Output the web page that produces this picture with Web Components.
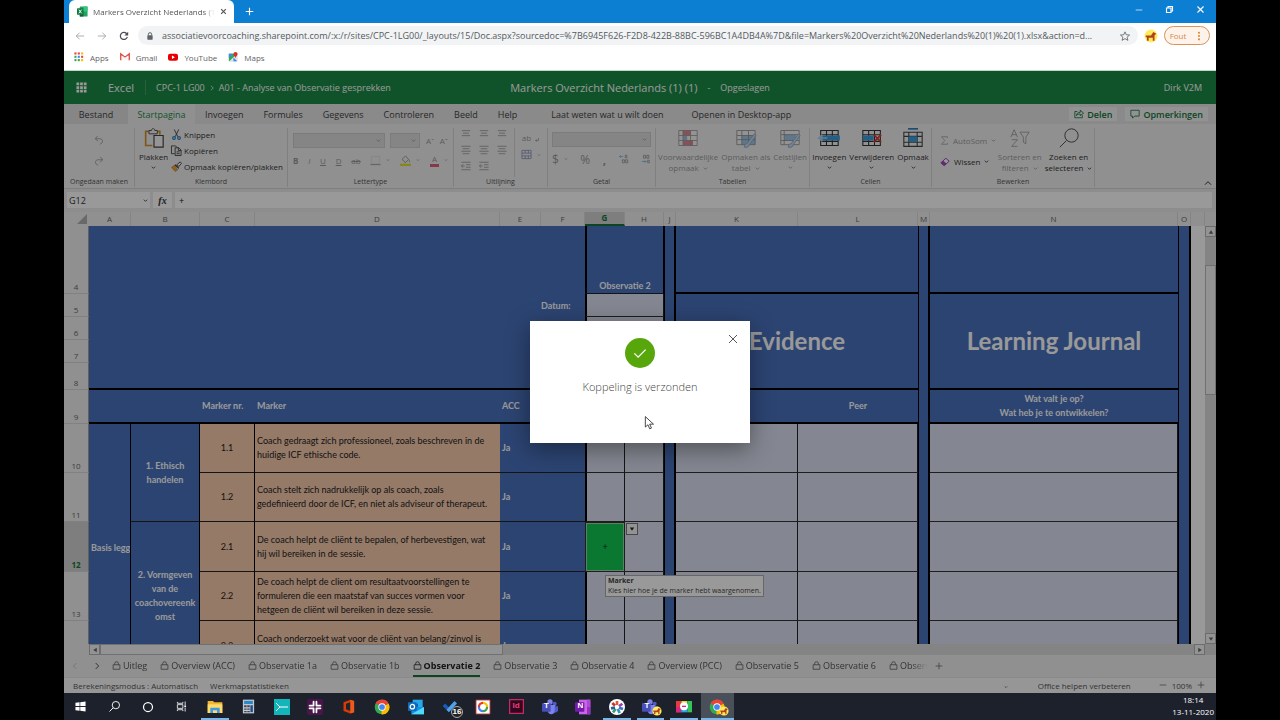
<!DOCTYPE html>
<html lang="nl">
<head>
<meta charset="utf-8">
<title>Markers Overzicht Nederlands (1) (1)</title>
<style>
    html, body { height: 100%; }
    body {
        margin: 0;
        background: #000;
        font-family: "Open Sans", "Noto Sans", sans-serif;
        font-size: 9px;
    }
    desktop-screen { margin: 0 5%; }
</style>
</head>
<body>
<desktop-screen>
    <browser-bar></browser-bar>
    <excel-app></excel-app>
    <task-bar></task-bar>
</desktop-screen>

<script>
// Icons, all on a 24x24 box
const ICONS = {
    excel: `<rect x="6" y="1" width="17" height="22" rx="1" fill="#21a366"/><path d="M14 1h9v11h-9z" fill="#33c481"/><path d="M6 12h8v11H6z" fill="#185c37"/><rect x="0" y="5" width="14" height="14" rx="1" fill="#107c41"/><path d="M4 8l6 8M10 8l-6 8" stroke="#fff" stroke-width="2"/>`,
    close: `<path d="M4 4l16 16M20 4L4 20" class="s"/>`,
    plus: `<path d="M12 2v20M2 12h20" class="s"/>`,
    minus: `<path d="M2 12h20" class="s"/>`,
    restore: `<path d="M4 8h12v12H4zM8 8V4h12v12h-4" class="s"/>`,
    back: `<path d="M22 12H3M11 4l-8 8 8 8" class="s"/>`,
    forward: `<path d="M2 12h19M13 4l8 8-8 8" class="s"/>`,
    reload: `<path d="M20 14a8.500 8.500 0 1 1-2-8l2 2" class="s"/><path d="M22 2v9h-9z" fill="currentColor"/>`,
    padlock: `<path d="M7 11V7a5 5 0 0 1 10 0v4" class="s"/><rect x="4" y="10" width="16" height="13" rx="2" fill="currentColor"/>`,
    lock: `<path d="M7 10V7a5 5 0 0 1 10 0v3M3 10h18v12H3z" class="s"/>`,
    star: `<path d="M12 2l3 7 8 .7-6 5.200 2 7.600-7-4.200-7 4.200 2-7.600L1 9.700 9 9z" class="s"/>`,
    horse: `<circle cx="12" cy="12" r="11" fill="#ffec5c"/><path d="M3 11h9l4-6 5 3-3 3v9h-3v-5H8v5H5v-6H3z" fill="#b4411e"/>`,
    dots: `<g fill="#e8822a"><circle cx="12" cy="4" r="2.500"/><circle cx="12" cy="12" r="2.500"/><circle cx="12" cy="20" r="2.500"/></g>`,
    apps: `<path d="M1 1h5v5H1z" fill="#ea4335"/><path d="M9 1h5v5H9z" fill="#ea4335"/><path d="M17 1h5v5h-5z" fill="#fbbc04"/><path d="M1 9h5v5H1z" fill="#34a853"/><path d="M9 9h5v5H9z" fill="#4285f4"/><path d="M17 9h5v5h-5z" fill="#ea4335"/><path d="M1 17h5v5H1z" fill="#34a853"/><path d="M9 17h5v5H9z" fill="#34a853"/><path d="M17 17h5v5h-5z" fill="#fbbc04"/>`,
    gmail: `<path d="M2 20V5l10 8 10-8v15" fill="none" stroke="#e0443a" stroke-width="3.500"/><path d="M4 19V8l8 6 8-6v11z" fill="#f5f5f5"/>`,
    youtube: `<rect x="0" y="4" width="24" height="17" rx="5" fill="#e80000"/><path d="M9.500 8.500l7 4-7 4z" fill="#fff"/>`,
    maps: `<path d="M2 4h20v18H2z" fill="#34a853"/><path d="M2 4h10L2 15z" fill="#4285f4"/><path d="M3 22L22 4v18z" fill="#dfe3e8"/><path d="M13 13l9 9h-9z" fill="#4285f4"/><path d="M18 0a5 5 0 0 1 5 5c0 4-4 5-5 10-1-5-5-6-5-10a5 5 0 0 1 5-5z" fill="#d93025"/>`,
    waffle: `<g fill="currentColor"><path d="M1 1h6v6H1zM9 1h6v6H9zM17 1h6v6h-6zM1 9h6v6H1zM9 9h6v6H9zM17 9h6v6h-6zM1 17h6v6H1zM9 17h6v6H9zM17 17h6v6h-6z"/></g>`,
    down: `<path d="M4 8l8 8 8-8" class="s"/>`,
    up: `<path d="M3 17l9-9 9 9" class="s"/>`,
    left: `<path d="M16 3l-9 9 9 9" class="s"/>`,
    right: `<path d="M8 3l9 9-9 9" class="s"/>`,
    triDown: `<path d="M3 6h18l-9 13z" fill="currentColor"/>`,
    triUp: `<path d="M3 19h18L12 5z" fill="currentColor"/>`,
    triLeft: `<path d="M19 3v18L5 12z" fill="currentColor"/>`,
    triRight: `<path d="M5 3v18l14-9z" fill="currentColor"/>`,
    undo: `<path d="M9 2L3 9l7 6M3 9h11c8 0 9 11 0 13" class="s"/>`,
    redo: `<path d="M15 2l6 7-7 6M21 9H10c-8 0-9 11 0 13" class="s"/>`,
    paste: `<path d="M10 21H2V4h17v4" fill="none" stroke="#d0922a" stroke-width="2"/><path d="M6 7V3h3c0-3 4-3 4 0h3v4z" fill="#f1f1f1" stroke="#555" stroke-width="1.200"/><path d="M12 9h11v14H12z" fill="#f8f8f8" stroke="#444" stroke-width="1.400"/>`,
    cut: `<path d="M7 1l8 16M17 1L9 17" stroke="#444" stroke-width="2" fill="none"/><g fill="none" stroke="#2b7fc0" stroke-width="2.500"><circle cx="6.500" cy="19.500" r="3"/><circle cx="17.500" cy="19.500" r="3"/></g>`,
    copy: `<path d="M8 19H1V2h9l3 3M9 6h8l5 5v12H9zM16 6v6h6M12 15h7M12 19h7" stroke="#333" stroke-width="1.800" fill="none"/>`,
    brush: `<path d="M13 8l7-6 3 3-6 7z" fill="#fff" stroke="#444" stroke-width="2"/><path d="M10 7l8 8-2 2-9-8z" fill="#444"/><path d="M6 10l9 9-6 4-8-9z" fill="#f0a030" stroke="#a86b1d"/>`,
    border: `<path d="M3 3h18v16H3z" fill="#eee" stroke="#ccc"/><path d="M1 21h22" class="s"/>`,
    fill: `<path d="M5 9l7-7 7 8-8 7zM19 10c3 3 2 5 2 6" class="s"/><path d="M0 19h24v5H0z" fill="#dfe22c"/>`,
    linesTop: `<path d="M2 4h20M5 10h14M2 16h20" class="s"/>`,
    lines: `<path d="M1 3h22M4 9h16M1 15h22M4 21h16" class="s"/>`,
    indent: `<path d="M1 3h22M12 9h11M12 15h11M1 21h22M1 12h8M5 8l-4 4 4 4" class="s"/>`,
    wrap: `<path d="M20 13v7h-8M15 17l-3 3 3 3" class="s"/>`,
    merge: `<path d="M2 3h20v18H2zM2 9h20M2 15h20M9 3v6M16 3v6M9 15v6M16 15v6" fill="none" stroke="#8b93b8" stroke-width="1.800"/>`,
    decUp: `<path d="M10 6H1l3-3M1 6l3 3" fill="none" stroke="#7db4d4" stroke-width="2"/><path d="M15 3h4v6h-4zM8 14h5v7H8zM16 14h5v7h-5z" class="s"/>`,
    decDown: `<path d="M2 18h10l-3-3M12 18l-3 3" fill="none" stroke="#7db4d4" stroke-width="2"/><path d="M6 3h5v7H6zM14 3h5v7h-5zM16 15h4v6h-4z" class="s"/>`,
    condFormat: `<path d="M1 3h22v18H1z" fill="#f6f6f6"/><path d="M6 3h9v6H6zM6 15h12v6H6z" fill="#e8868e"/><path d="M6 9h5v6H6z" fill="#9ec0e0"/><path d="M1 3h22v18H1zM1 9h22M1 15h22M6 3v18M15 3v18" fill="none" stroke="#989898"/>`,
    tableFormat: `<path d="M1 3h22v17H1z" fill="#f6f6f6"/><path d="M7 9h16v11H7z" fill="#9ec5e8"/><path d="M1 3h22v17H1zM1 9h22M1 14h22M7 3v17M15 3v17" fill="none" stroke="#909090"/><path d="M22 7L13 19c-2 0-3 1-3 4 4 1 6-1 6-3L24 9z" fill="#c3d9ee" stroke="#88a8c8"/>`,
    cellStyle: `<path d="M1 3h22v17H1z" fill="#f6f6f6"/><path d="M5 8h14v7H5z" fill="#9ec5e8"/><path d="M1 3h22v17H1zM1 8h22M1 15h22M5 3v17" fill="none" stroke="#909090"/><path d="M22 7L13 19c-2 0-3 1-3 4 4 1 6-1 6-3L24 9z" fill="#c3d9ee" stroke="#88a8c8"/>`,
    insert: `<path d="M2 3h21v18H2zM2 8h21M2 16h21M9 3v18M16 3v18" fill="#f4f4f4" stroke="#333" stroke-width="1.300"/><path d="M4 9h21v6H4z" fill="#3c9ddc"/><path d="M10 12H0l4-4M0 12l4 4" stroke="#a8d4f2" stroke-width="2" fill="none"/>`,
    remove: `<path d="M1 3h21v18H1zM1 8h21M1 16h21M8 3v18M15 3v18" fill="#f4f4f4" stroke="#333" stroke-width="1.300"/><path d="M1 9h13v6H1z" fill="#3c9ddc"/><path d="M14 8l9 9M23 8l-9 9" stroke="#e0392f" stroke-width="2"/>`,
    format: `<path d="M1 5h22v17H1zM1 10h22M1 17h22M7 5v17M17 5v17" fill="#f4f4f4" stroke="#444" stroke-width="1.300"/><path d="M7 10h10v7H7z" fill="#3c9ddc"/><path d="M6 1h12" stroke="#2b7fc0" stroke-width="2"/>`,
    sigma: `<path d="M20 5V2H4l9 10-9 10h16v-3" class="s"/>`,
    eraser: `<path d="M2 14L14 3l8 7L10 21z" fill="#fff" stroke="#7a3294" stroke-width="2"/><path d="M2 14l6-5 8 7-6 5z" fill="#a845c4"/>`,
    filter: `<path d="M12 5h11l-4 6v8l-3-2v-6z" class="s"/><path d="M1 11l4-9 4 9M2.500 8h5M2 14h7l-7 8h7" class="s"/>`,
    find: `<circle cx="15" cy="9" r="8" class="s"/><path d="M9 15l-8 8" class="s"/>`,
    share: `<path d="M8 6H2v15h18v-6M6 16c0-6 4-8 9-8V3l8 7-8 6v-4c-4 0-7 0-9 4z" class="s"/>`,
    comment: `<path d="M2 3h20v14H11l-5 5v-5H2z" class="s"/>`,
    check: `<circle cx="12" cy="12" r="12" fill="#57a70c"/><path d="M7.500 12.300l3 3 6-6" fill="none" stroke="#fff" stroke-width="1.100"/>`,
    pointer: `<path d="M4 1v18l4.500-4 3 7 3-1.300-3-6.700H18z" fill="#fff" stroke="#222" stroke-width="1.400"/>`,
    windows: `<path d="M1 4l9-1.300V11H1zM11.500 2.500L23 1v10H11.500zM1 13h9v8.300L1 20zM11.500 13H23v10l-11.500-1.500z" fill="#fff"/>`,
    cortana: `<circle cx="12" cy="12" r="9" fill="none" stroke="#fff" stroke-width="2.500"/>`,
    taskview: `<path d="M3 8h12v8H3zM3 2v3h12V2M3 22v-3h12v3M20 1v9M20 14v9" fill="none" stroke="#fff" stroke-width="1.800"/><path d="M18 10h4v3h-4z" fill="#fff"/>`,
    explorer: `<path d="M1 3h8l2 2h12v16H1z" fill="#f5b62e"/><path d="M1 8h22v13H1z" fill="#ffdb6c"/><path d="M5 21v-8h14v8h-4v-4H9v4z" fill="#3d9be0"/>`,
    calc: `<path d="M3 1h18v22H3z" fill="#bfc8d0"/><path d="M5 3h14v5H5z" fill="#2b88c8"/><path d="M5 10h4v3H5zM10 10h4v3h-4zM5 15h4v2H5zM10 15h4v2h-4zM5 19h4v2H5zM10 19h4v2h-4z" fill="#445"/><path d="M15 10h4v11h-4z" fill="#1f4f86"/>`,
    flow: `<path d="M0 0h24v24H0z" fill="#12b5ba"/><path d="M3 6l6 6-6 6M9 12h12" stroke="#fff" fill="none" stroke-width="1.500"/>`,
    slack: `<rect width="24" height="24" rx="3" fill="#4a154b"/><path d="M10 4v6M4 10h1M14 10h6M14 5v0M14 14v6M4 14h6M20 14h0M10 19v0M14 10V4M4 10h6M10 14v6M14 14h6" stroke="#fff" stroke-width="3" stroke-linecap="round"/><path d="M12 2v20M2 12h20" stroke="#4a154b" stroke-width="1"/>`,
    office: `<path d="M15 1L4 5v14l11 4 6-2V3z" fill="#d83b01"/><path d="M15 5l-7 2.500v9L15 19z" fill="#20242e"/><path d="M15 1l6 2v18l-6 2z" fill="#ea5b1e"/>`,
    chrome: `<circle cx="12" cy="12" r="11" fill="#34a853"/><path d="M12 12L2.500 6.500A11 11 0 0 1 22 7z" fill="#ea4335"/><path d="M12 12h0L22 7a11 11 0 0 1-11 16z" fill="#fbbc04"/><circle cx="12" cy="12" r="5.500" fill="#fff"/><circle cx="12" cy="12" r="4.300" fill="#4285f4"/>`,
    outlook: `<path d="M7 1h15v13H7z" fill="#28a8ea"/><path d="M7 7h8v7H7z" fill="#0364b8"/><path d="M5 12h19v11H5z" fill="#1490df"/><path d="M5 23l19-11v11z" fill="#50d9ff"/><rect y="5" width="13" height="13" rx="1" fill="#0f6cbd"/><circle cx="6.500" cy="11.500" r="3.300" fill="none" stroke="#fff" stroke-width="1.800"/>`,
    todo: `<path d="M1 11l4-4 6 6-4 4z" fill="#185abd"/><path d="M7 17l13-14 4 4-13 14z" fill="#4aa3f0"/>`,
    photos: `<path d="M0 0h24v24H0z" fill="#fff" stroke="#c33" stroke-width="1.500"/><path d="M5 12a7 7 0 0 1 7-7" class="c" stroke="#e03c31"/><path d="M12 5a7 7 0 0 1 7 7" class="c" stroke="#fbbc04"/><path d="M19 12a7 7 0 0 1-7 7" class="c" stroke="#34a853"/><path d="M12 19a7 7 0 0 1-7-7" class="c" stroke="#4285f4"/>`,
    indesign: `<path d="M1 1h22v22H1z" fill="#35071c" stroke="#c52a68" stroke-width="2"/>`,
    teams: `<circle cx="19" cy="7" r="3" fill="#5059c9"/><circle cx="12" cy="4.500" r="4" fill="#7b83eb"/><path d="M9 9h11v8a6 6 0 0 1-11 3z" fill="#7b83eb"/><path d="M19 11h5v6a4 4 0 0 1-5 3z" fill="#5059c9"/><rect y="6" width="13" height="13" rx="1" fill="#464eb8"/>`,
    onenote: `<path d="M6 1h17v22H6z" fill="#ca64ea"/><path d="M18 1h5v11h-5z" fill="#ae4bd5"/><path d="M18 12h5v11h-5z" fill="#9332bf"/><rect y="5" width="14" height="14" rx="1" fill="#7719aa"/>`,
    pinwheel: `<circle cx="12" cy="12" r="12" fill="#fff"/><g stroke-width="4"><path d="M12 9V3" stroke="#e4572e"/><path d="M15 11l5-4" stroke="#8e44ad"/><path d="M15 13l6 2" stroke="#3f6fc4"/><path d="M13 15l3 6" stroke="#2b94b8"/><path d="M10 15l-4 5" stroke="#2fa36b"/><path d="M9 13l-6 1" stroke="#2c5aa0"/><path d="M9 10L5 6" stroke="#c0392b"/></g>`,
    video: `<path d="M0 3h8v17H0z" fill="#e93b3b"/><path d="M8 3h9v9H8z" fill="#f3d02a"/><path d="M17 3h7v17h-7z" fill="#35c35a"/><path d="M0 12h8v8H0z" fill="#d6287c"/><path d="M8 12h9v8H8z" fill="#2da5e8"/><circle cx="12" cy="11" r="6" fill="#fff"/><path d="M9 11h6" stroke="#d6287c" stroke-width="2"/>`
};

class UiIcon extends HTMLElement {
    constructor() {
        super();
        this.attachShadow({ mode: "open" });
    }

    connectedCallback() {
        const size = this.getAttribute("size") || 10;
        const weight = this.getAttribute("weight") || 2;
        this.shadowRoot.innerHTML = `
        <style>
            :host { display: inline-flex; flex: none; }
            svg { display: block; overflow: visible; }
            .s { fill: none; stroke: currentColor; stroke-width: ${weight}; }
            .c { fill: none; stroke-width: 4; }
        </style>
        <svg width="${size}" height="${size}" viewBox="0 0 24 24" aria-hidden="true">${ICONS[this.getAttribute("name")]}</svg>`;
    }
}
customElements.define("ui-icon", UiIcon);

// Reset shared by the elements that hold controls
const CONTROLS = `
    * { box-sizing: border-box; }
    button, input, select {
        margin: 0;
        padding: 0;
        border: 0;
        background: none;
        color: inherit;
        font: inherit;
        appearance: none;
        border-radius: 0;
    }
    button { display: flex; align-items: center; justify-content: center; white-space: nowrap; }
    a { color: inherit; text-decoration: none; }
`;

class DesktopScreen extends HTMLElement {
    constructor() {
        super();
        this.attachShadow({ mode: "open" });
        this.shadowRoot.innerHTML = `
        <style>
            :host { display: flex; flex-direction: column; height: 100vh; overflow: hidden; background: #fff; }
        </style>
        <slot></slot>`;
    }
}
customElements.define("desktop-screen", DesktopScreen);

class BrowserBar extends HTMLElement {
    constructor() {
        super();
        this.attachShadow({ mode: "open" });
        this.shadowRoot.innerHTML = `
        <style>
            ${CONTROLS}
            :host { display: block; background: #fff; color: #5f6368; font-size: 8px; border-bottom: 1px solid #c4d6ca; }
            .titles { display: flex; height: 23px; background: #0c7fd3; padding-left: 5px; color: #fff; }
            .tab { display: flex; align-items: center; gap: 5px; width: 165px; padding: 0 7px 0 8px; background: #fff; color: #555; border-radius: 6px 6px 0 0; }
            .tab span { flex: 1; overflow: hidden; white-space: nowrap; -webkit-mask-image: linear-gradient(90deg, #000 90%, transparent); mask-image: linear-gradient(90deg, #000 90%, transparent); }
            .new { width: 30px; }
            .win { display: flex; margin-left: auto; padding-bottom: 4px; }
            .win button { width: 31px; }
            .tools { display: flex; align-items: center; height: 25px; padding: 0 6px 0 8px; gap: 6px; }
            .nav { width: 16px; height: 16px; color: #9aa0a6; }
            .nav.dark { color: #4a4d51; }
            .omni { display: flex; flex: 1; align-items: center; gap: 8px; height: 19px; padding: 0 8px; border-radius: 10px; background: #f1f3f4; }
            .omni input { flex: 1; min-width: 0; font-size: 9px; color: #55595e; text-overflow: ellipsis; }
            .error { gap: 8px; width: 46px; height: 19px; border: 1px solid #d99257; border-radius: 10px; background: #fdf3ea; color: #d98748; }
            .marks { display: flex; gap: 11px; height: 22px; padding: 0 10px 4px; align-items: center; }
            .marks a { display: flex; gap: 6px; align-items: center; }
        </style>
        <div class="titles">
            <div class="tab"><ui-icon name="excel" size="11"></ui-icon><span>Markers Overzicht Nederlands (1) (1)</span><button aria-label="Tabblad sluiten"><ui-icon name="close" size="7" weight="4"></ui-icon></button></div>
            <button class="new" aria-label="Nieuw tabblad"><ui-icon name="plus" size="9" weight="3"></ui-icon></button>
            <div class="win">
                <button aria-label="Minimaliseren"><ui-icon name="minus" size="8"></ui-icon></button>
                <button aria-label="Herstellen"><ui-icon name="restore" size="9" weight="3"></ui-icon></button>
                <button aria-label="Sluiten"><ui-icon name="close" size="9" weight="3"></ui-icon></button>
            </div>
        </div>
        <div class="tools">
            <button class="nav" aria-label="Terug"><ui-icon name="back"></ui-icon></button>
            <button class="nav" aria-label="Vooruit"><ui-icon name="forward"></ui-icon></button>
            <button class="nav dark" aria-label="Vernieuwen"><ui-icon name="reload" weight="3"></ui-icon></button>
            <div class="omni">
                <ui-icon name="padlock" size="8" weight="3"></ui-icon>
                <input aria-label="Adres" value="associatievoorcoaching.sharepoint.com/:x:/r/sites/CPC-1LG00/_layouts/15/Doc.aspx?sourcedoc=%7B6945F626-F2D8-422B-88BC-596BC1A4DB4A%7D&amp;file=Markers%20Overzicht%20Nederlands%20(1)%20(1).xlsx&amp;action=d...">
                <ui-icon name="star"></ui-icon>
            </div>
            <ui-icon name="horse" size="14"></ui-icon>
            <button class="error">Fout <ui-icon name="dots"></ui-icon></button>
        </div>
        <nav class="marks">
            <a href="#"><ui-icon name="apps"></ui-icon>Apps</a>
            <a href="#"><ui-icon name="gmail"></ui-icon>Gmail</a>
            <a href="#"><ui-icon name="youtube"></ui-icon>YouTube</a>
            <a href="#"><ui-icon name="maps"></ui-icon>Maps</a>
        </nav>`;
    }
}
customElements.define("browser-bar", BrowserBar);

class RibbonGroup extends HTMLElement {
    constructor() {
        super();
        this.attachShadow({ mode: "open" });
        this.shadowRoot.innerHTML = `
        <style>
            :host { display: flex; flex-direction: column; border-right: 1px solid #d6d6d6; box-sizing: border-box; }
            .content { display: flex; height: 49px; }
            .label { text-align: center; font-size: 7px; line-height: 10px; color: #555; }
        </style>
        <div class="content"><slot></slot></div>
        <div class="label">${this.getAttribute("label")}</div>`;
    }
}
customElements.define("ribbon-group", RibbonGroup);

class ExcelRibbon extends HTMLElement {
    constructor() {
        super();
        this.attachShadow({ mode: "open" });
        this.shadowRoot.innerHTML = `
        <style>
            ${CONTROLS}
            :host { display: block; color: #333; }
            .tabs { display: flex; height: 20px; background: #e6e6e6; color: #444; }
            .tabs button { padding: 0 10px; }
            .tabs .file { width: 64px; background: #dfdfdf; }
            .tabs .on { width: 67px; background: #f1f1f1; color: #1c8b46; }
            .tabs .tell { padding-left: 24px; }
            .tabs .desk { padding-left: 18px; }
            .side { display: flex; gap: 8px; margin-left: auto; padding: 3px 8px 3px 0; }
            .side button { gap: 3px; padding: 0 5px; background: #f4f4f4; color: #13743a; font-weight: 600; }
            .groups { display: grid; grid-template-columns: 71px 153px 166px 94px 108px 154px 122px 163px 1fr; height: 65px; padding: 4px 0; background: #f1f1f1; border-bottom: 1px solid #d4d4d4; font-size: 8px; }
            .off { color: #999; }
            .col { display: flex; flex-direction: column; }
            .row { display: flex; align-items: center; }
            .paste { align-items: flex-start; padding-left: 4px; }
            .undo { flex: 1; align-items: center; gap: 11px; padding-top: 7px; }
            .big { flex-direction: column; justify-content: flex-start; line-height: 11px; }
            .big ui-icon { margin-bottom: 3px; }
            .big ui-icon + ui-icon, .big span ui-icon { margin: 0 0 0 2px; }
            .big > ui-icon:last-child { margin: 3px 0 0; }
            .clip { gap: 5px; padding: 1px 0 0 3px; }
            .clip button { justify-content: flex-start; gap: 2px; height: 11px; }
            .font { padding: 4px 5px; gap: 4px; width: 100%; }
            .font .row, .num .row { height: 16px; justify-content: space-between; }
            .combo { display: flex; align-items: center; justify-content: flex-end; height: 15px; border: 1px solid #cdcdcd; padding-right: 3px; background: #dedede; }
            .family { width: 92px; }
            .size { width: 30px; }
            .pair { display: flex; align-items: center; gap: 5px; }
            .swatch { border-bottom: 3px solid #e0607a; padding: 0 2px; line-height: 10px; }
            .align { display: grid; grid-template-columns: 18px 18px 18px; gap: 6px 0; padding: 1px 0 0 3px; align-content: start; justify-items: center; }
            .wrap { margin-left: 3px; padding: 4px 0 0 6px; border-left: 1px solid #d6d6d6; gap: 6px; }
            .num { padding: 4px 4px; gap: 4px; width: 100%; }
            .signs { font-size: 12px; }
            .even { flex: 1; display: grid; grid-auto-flow: column; justify-content: center; gap: 3px; align-content: start; }
            .find { padding: 7px 0 0 8px; gap: 10px; }
            .find button { gap: 4px; justify-content: flex-start; }
            .end { display: flex; align-items: flex-end; justify-content: flex-end; padding-right: 4px; }
            .formula { display: flex; gap: 3px; padding: 3px 4px 4px 3px; height: 23px; background: #ececec; }
            .formula > * { background: #fff; }
            .name { display: flex; align-items: center; width: 83px; padding: 0 2px; }
            .name input { width: 100%; min-width: 0; }
            .fx { width: 19px; font: italic bold 10px "Liberation Serif", serif; }
            .formula > input { flex: 1; min-width: 0; padding: 0 4px; color: #111; }
        </style>
        <div class="tabs">
            <button class="file">Bestand</button><button class="on">Startpagina</button><button>Invoegen</button><button>Formules</button><button>Gegevens</button><button>Controleren</button><button>Beeld</button><button>Help</button><button class="tell">Laat weten wat u wilt doen</button><button class="desk">Openen in Desktop-app</button>
            <div class="side">
                <button><ui-icon name="share"></ui-icon>Delen</button>
                <button><ui-icon name="comment"></ui-icon>Opmerkingen</button>
            </div>
        </div>
        <div class="groups">
            <ribbon-group label="Ongedaan maken">
                <div class="col undo off"><button aria-label="Ongedaan maken"><ui-icon name="undo"></ui-icon></button><button aria-label="Opnieuw"><ui-icon name="redo"></ui-icon></button></div>
            </ribbon-group>
            <ribbon-group label="Klembord">
                <div class="row paste">
                    <button class="big"><ui-icon name="paste" size="20"></ui-icon>Plakken<ui-icon name="down" size="5" weight="4"></ui-icon></button>
                    <div class="col clip">
                        <button><ui-icon name="cut" size="11"></ui-icon>Knippen</button>
                        <button><ui-icon name="copy" size="11"></ui-icon>Kopiëren</button>
                        <button><ui-icon name="brush" size="11"></ui-icon>Opmaak kopiëren/plakken</button>
                    </div>
                </div>
            </ribbon-group>
            <ribbon-group label="Lettertype">
                <div class="col font off">
                    <div class="row">
                        <button class="combo family" aria-label="Lettertype"><ui-icon name="down" size="5" weight="4"></ui-icon></button>
                        <button class="combo size" aria-label="Tekengrootte"><ui-icon name="down" size="5" weight="4"></ui-icon></button>
                        <button>Aˆ</button><button>Aˇ</button>
                    </div>
                    <div class="row">
                        <button><b>B</b></button><button><i>I</i></button><button><u>U</u></button><button><u>D</u></button><button><s>ab</s></button>
                        <button class="pair"><ui-icon name="border" size="11"></ui-icon><ui-icon name="down" size="4" weight="4"></ui-icon></button>
                        <button class="pair"><ui-icon name="fill" size="11"></ui-icon><ui-icon name="down" size="4" weight="4"></ui-icon></button>
                        <button class="pair"><span class="swatch">A</span><ui-icon name="down" size="4" weight="4"></ui-icon></button>
                    </div>
                </div>
            </ribbon-group>
            <ribbon-group label="Uitlijning">
                <div class="align off">
                    <ui-icon name="linesTop"></ui-icon><ui-icon name="linesTop"></ui-icon><ui-icon name="linesTop"></ui-icon>
                    <ui-icon name="lines"></ui-icon><ui-icon name="lines"></ui-icon><ui-icon name="lines"></ui-icon>
                    <ui-icon name="indent"></ui-icon><ui-icon name="indent"></ui-icon>
                </div>
                <div class="col wrap off">
                    <button>ab<ui-icon name="wrap" size="9"></ui-icon></button>
                    <button class="pair"><ui-icon name="merge" size="11"></ui-icon><ui-icon name="down" size="4" weight="4"></ui-icon></button>
                </div>
            </ribbon-group>
            <ribbon-group label="Getal">
                <div class="col num off">
                    <button class="combo" aria-label="Getalnotatie"><ui-icon name="down" size="5" weight="4"></ui-icon></button>
                    <div class="row signs">
                        <button class="pair">$<ui-icon name="down" size="4" weight="4"></ui-icon></button><button>%</button><button><b>,</b></button>
                        <button aria-label="Meer decimalen"><ui-icon name="decUp"></ui-icon></button><button aria-label="Minder decimalen"><ui-icon name="decDown"></ui-icon></button>
                    </div>
                </div>
            </ribbon-group>
            <ribbon-group label="Tabellen">
                <div class="even off">
                    <button class="big"><ui-icon name="condFormat" size="20"></ui-icon>Voorwaardelijke<span>opmaak <ui-icon name="down" size="5" weight="4"></ui-icon></span></button>
                    <button class="big"><ui-icon name="tableFormat" size="20"></ui-icon>Opmaken als<span>tabel <ui-icon name="down" size="5" weight="4"></ui-icon></span></button>
                    <button class="big"><ui-icon name="cellStyle" size="20"></ui-icon>Celstijlen<ui-icon name="down" size="5" weight="4"></ui-icon></button>
                </div>
            </ribbon-group>
            <ribbon-group label="Cellen">
                <div class="even">
                    <button class="big"><ui-icon name="insert" size="20"></ui-icon>Invoegen<ui-icon name="down" size="5" weight="4"></ui-icon></button>
                    <button class="big"><ui-icon name="remove" size="20"></ui-icon>Verwijderen<ui-icon name="down" size="5" weight="4"></ui-icon></button>
                    <button class="big"><ui-icon name="format" size="20"></ui-icon>Opmaak<ui-icon name="down" size="5" weight="4"></ui-icon></button>
                </div>
            </ribbon-group>
            <ribbon-group label="Bewerken">
                <div class="col find">
                    <button class="off"><ui-icon name="sigma" size="9"></ui-icon>AutoSom <ui-icon name="down" size="5" weight="4"></ui-icon></button>
                    <button><ui-icon name="eraser"></ui-icon>Wissen <ui-icon name="down" size="5" weight="4"></ui-icon></button>
                </div>
                <div class="even">
                    <button class="big off"><ui-icon name="filter" size="20" weight="1"></ui-icon>Sorteren en<span>filteren <ui-icon name="down" size="5" weight="4"></ui-icon></span></button>
                    <button class="big"><ui-icon name="find" size="20" weight="1"></ui-icon>Zoeken en<span>selecteren <ui-icon name="down" size="5" weight="4"></ui-icon></span></button>
                </div>
            </ribbon-group>
            <div class="end"><button aria-label="Lint samenvouwen"><ui-icon name="up" size="8" weight="3"></ui-icon></button></div>
        </div>
        <div class="formula">
            <label class="name"><input aria-label="Naamvak" value="G12"><ui-icon name="down" size="5" weight="4"></ui-icon></label>
            <button class="fx">fx</button>
            <input aria-label="Formulebalk" value="+">
        </div>`;
    }
}
customElements.define("excel-ribbon", ExcelRibbon);

class WorksheetGrid extends HTMLElement {
    constructor() {
        super();
        this.attachShadow({ mode: "open" });
        this.shadowRoot.innerHTML = `
        <style>
            ${CONTROLS}
            :host { display: grid; grid-template-columns: 1fr 11px; grid-template-rows: 1fr 11px; flex: 1; min-height: 0; background: #dcdcdc; }
            .view { overflow: hidden; min-height: 0; background: #fff; }
            table { table-layout: fixed; width: 100%; border-collapse: separate; border-spacing: 0; font-family: Lato, sans-serif; font-size: 9px; line-height: 14px; color: #222; }
            th { background: #f0f0f0; color: #666; font: 8px/12px "Open Sans", sans-serif; padding: 0; }
            thead th { height: 14px; border-right: 1px solid #dcdcdc; }
            thead th.on, tbody th.on { background: #d2d2d2; color: #13743a; font-weight: 700; }
            thead th.on { border-bottom: 2px solid #13743a; }
            thead .corner { text-align: right; padding: 0 2px; border: 0; }
            .corner svg { display: block; margin-left: auto; }
            tbody th { vertical-align: bottom; border-bottom: 1px solid #d8d8d8; border-right: 1px solid #a0a0a0; }
            td { padding: 0; }
            .blue { background: #4a72bf; color: #fff; font-weight: 700; }
            .pale { background: #dde2f2; border-right: 1px solid #222; border-bottom: 1px solid #333; }
            .peach { background: #f8cbad; border-bottom: 1px solid #222; }
            .c { text-align: center; }
            .l { padding-left: 2px; text-align: left; }
            .line { border-bottom: 1px solid #222; }
            .b { border-bottom: 2px solid #000; }
            .r { border-right: 1px solid #000; }
            .edge { border-left: 2px solid #000; }
            .bar { border-right: 2px solid #000; border-left: 1px solid #000; }
            .foot { vertical-align: bottom; }
            .title { font-size: 24px; line-height: 30px; }
            .stage { overflow: hidden; white-space: nowrap; }
            .top { vertical-align: top; padding-top: 11px; }
            .void { background: #fff; }
            .active { position: relative; background: #12c850; border: 1px solid #333; box-shadow: inset 0 0 0 1px #9ad8a8; }
            .pick { position: absolute; left: 40px; top: 0; width: 12px; height: 12px; border: 1px solid #777; background: #f6f6f6; }
            .tip { position: absolute; z-index: 1; left: 19px; top: 52px; width: 159px; padding: 0 2px; border: 1px solid #aaa; background: #fff; color: #444; font: 7px/10px "Open Sans", sans-serif; text-align: left; white-space: nowrap; }
            .tip b { display: block; }
            .v, .h { display: flex; }
            .v { flex-direction: column; padding-top: 14px; background: linear-gradient(#f0f0f0 14px, #dcdcdc 14px); }
            .v button, .h button { width: 11px; height: 11px; border: 1px solid #b4b4b4; background: #f6f6f6; color: #666; }
            .v .thumb { height: 130px; margin: 28px 0 auto; border: 1px solid #bbb; background: #f6f6f6; }
            .h { padding-left: 25px; background: linear-gradient(90deg, #f0f0f0 25px, #dcdcdc 25px); }
            .h .thumb { width: 403px; margin-right: auto; border: 1px solid #bbb; background: #f6f6f6; }
        </style>
        <div class="view">
        <table>
            <colgroup>
                <col style="width:25px"><col style="width:42px"><col style="width:69px"><col style="width:55px"><col style="width:245px"><col style="width:41px"><col style="width:44px"><col style="width:40px"><col style="width:39px"><col style="width:12px"><col style="width:122px"><col style="width:120px"><col style="width:12px"><col style="width:248px"><col style="width:13px"><col>
            </colgroup>
            <thead>
                <tr><th class="corner"><svg width="10" height="10"><path d="M10 0v10H0z" fill="#b0b0b0"/></svg></th><th>A</th><th>B</th><th>C</th><th>D</th><th>E</th><th>F</th><th class="on">G</th><th>H</th><th>J</th><th>K</th><th>L</th><th>M</th><th>N</th><th>O</th><th></th></tr>
            </thead>
            <tbody>
                <tr style="height:68px"><th>4</th><td class="blue b" colspan="5" rowspan="5"></td><td class="blue"></td><td class="blue edge r line c foot" colspan="2">Observatie 2</td><td class="blue bar" rowspan="11"></td><td class="blue b" colspan="2"></td><td class="blue bar" rowspan="11"></td><td class="blue b"></td><td class="blue bar" rowspan="11"></td><td class="void" rowspan="11"></td></tr>
                <tr style="height:23px"><th>5</th><td class="blue">Datum:</td><td class="pale edge" colspan="2"></td><td class="blue title c b" colspan="2" rowspan="4">Evidence</td><td class="blue title c b" rowspan="4">Learning Journal</td></tr>
                <tr style="height:23px"><th>6</th><td class="blue b" rowspan="3"></td><td class="pale edge" colspan="2"></td></tr>
                <tr style="height:23px"><th>7</th><td class="pale edge" colspan="2"></td></tr>
                <tr style="height:27px"><th>8</th><td class="pale edge" colspan="2"></td></tr>
                <tr style="height:34px"><th>9</th><td class="blue b" colspan="2"></td><td class="blue b l">Marker nr.</td><td class="blue b l">Marker</td><td class="blue b l">ACC</td><td class="blue b"></td><td class="blue b edge"></td><td class="blue b"></td><td class="blue b"></td><td class="blue b c">Peer</td><td class="blue b c">Wat valt je op?<br>Wat heb je te ontwikkelen?</td></tr>
                <tr style="height:49px"><th>10</th><td class="blue r l stage" rowspan="5">Basis leggen</td><td class="blue r line c" rowspan="2">1. Ethisch<br>handelen</td><td class="peach r c">1.1</td><td class="peach l">Coach gedraagt zich professioneel, zoals beschreven in de<br>huidige ICF ethische code.</td><td class="blue line l">Ja</td><td class="blue line"></td><td class="pale edge"></td><td class="pale"></td><td class="pale"></td><td class="pale"></td><td class="pale"></td></tr>
                <tr style="height:49px"><th>11</th><td class="peach r c">1.2</td><td class="peach l">Coach stelt zich nadrukkelijk op als coach, zoals<br>gedefinieerd door de ICF, en niet als adviseur of therapeut.</td><td class="blue line l">Ja</td><td class="blue line"></td><td class="pale edge"></td><td class="pale"></td><td class="pale"></td><td class="pale"></td><td class="pale"></td></tr>
                <tr style="height:50px"><th class="on">12</th><td class="blue r line c" rowspan="3">2. Vormgeven<br>van de<br>coachovereenk<br>omst</td><td class="peach r c">2.1</td><td class="peach l">De coach helpt de cliënt te bepalen, of herbevestigen, wat<br>hij wil bereiken in de sessie.</td><td class="blue line l">Ja</td><td class="blue line"></td>
                    <td class="active c">+<button class="pick" aria-label="Keuzelijst"><ui-icon name="triDown" size="6"></ui-icon></button><div class="tip" role="tooltip"><b>Marker</b>Kies hier hoe je de marker hebt waargenomen.</div></td>
                    <td class="pale"></td><td class="pale"></td><td class="pale"></td><td class="pale"></td></tr>
                <tr style="height:49px"><th>13</th><td class="peach r c">2.2</td><td class="peach l">De coach helpt de client om resultaatvoorstellingen te<br>formuleren die een maatstaf van succes vormen voor<br>hetgeen de cliënt wil bereiken in deze sessie.</td><td class="blue line l">Ja</td><td class="blue line"></td><td class="pale edge"></td><td class="pale"></td><td class="pale"></td><td class="pale"></td><td class="pale"></td></tr>
                <tr style="height:50px"><th></th><td class="peach r c">2.3</td><td class="peach l top">Coach onderzoekt wat voor de cliënt van belang/zinvol is</td><td class="blue line l">Ja</td><td class="blue line"></td><td class="pale edge"></td><td class="pale"></td><td class="pale"></td><td class="pale"></td><td class="pale"></td></tr>
            </tbody>
        </table>
        </div>
        <div class="v"><button aria-label="Omhoog"><ui-icon name="triUp" size="6"></ui-icon></button><div class="thumb"></div><button aria-label="Omlaag"><ui-icon name="triDown" size="6"></ui-icon></button></div>
        <div class="h"><button aria-label="Links"><ui-icon name="triLeft" size="6"></ui-icon></button><div class="thumb"></div><button aria-label="Rechts"><ui-icon name="triRight" size="6"></ui-icon></button></div>`;
    }
}
customElements.define("worksheet-grid", WorksheetGrid);

class SheetTabs extends HTMLElement {
    constructor() {
        super();
        this.attachShadow({ mode: "open" });
        const names = ["Uitleg", "Overview (ACC)", "Observatie 1a", "Observatie 1b", "Observatie 2", "Observatie 3", "Observatie 4", "Overview (PCC)", "Observatie 5", "Observatie 6", "Observatie 7"];
        const tabs = names.map(name => `<button class="tab${name === "Observatie 2" ? " on" : ""}"><ui-icon name="lock" size="9"></ui-icon>${name}</button>`).join("");
        this.shadowRoot.innerHTML = `
        <style>
            ${CONTROLS}
            :host { display: block; color: #555; }
            .bar { display: flex; align-items: stretch; height: 22px; background: #f0f0f0; }
            .arrow { width: 22px; }
            .arrow.off { color: #b0b0b0; }
            .list { display: flex; gap: 13px; width: 820px; padding-left: 4px; overflow: hidden; -webkit-mask-image: linear-gradient(90deg, #000 98%, transparent); mask-image: linear-gradient(90deg, #000 98%, transparent); }
            .tab { gap: 2px; flex: none; border-bottom: 2px solid transparent; }
            .on { border-color: #13743a; color: #222; font-weight: 700; }
            .status { display: flex; align-items: center; gap: 12px; height: 16px; padding: 0 11px 1px 9px; background: #fbfbfb; font-size: 8px; border-top: 1px solid #e6e6e6; }
            .status .grow { flex: 1; text-align: right; padding-right: 18px; }
            .zoom { display: flex; gap: 5px; align-items: center; margin-left: 16px; }
        </style>
        <div class="bar">
            <button class="arrow off" aria-label="Vorige"><ui-icon name="left" size="8"></ui-icon></button>
            <button class="arrow" aria-label="Volgende"><ui-icon name="right" size="8" weight="3"></ui-icon></button>
            <div class="list">${tabs}</div>
            <button class="arrow" aria-label="Nieuw blad"><ui-icon name="plus" size="8"></ui-icon></button>
        </div>
        <div class="status">
            <span>Berekeningsmodus : Automatisch</span><span>Werkmapstatistieken</span>
            <span class="grow"><ui-icon name="down" size="4" weight="4"></ui-icon></span>
            <span>Office helpen verbeteren</span>
            <div class="zoom"><button aria-label="Uitzoomen"><ui-icon name="minus" size="8"></ui-icon></button>100%<button aria-label="Inzoomen"><ui-icon name="plus" size="8"></ui-icon></button></div>
        </div>`;
    }
}
customElements.define("sheet-tabs", SheetTabs);

class MessageDialog extends HTMLElement {
    constructor() {
        super();
        this.attachShadow({ mode: "open" });
        this.shadowRoot.innerHTML = `
        <style>
            ${CONTROLS}
            :host { position: absolute; inset: 0; z-index: 2; display: grid; place-items: center; background: rgba(0, 0, 0, 0.4); }
            .box { position: relative; display: flex; flex-direction: column; align-items: center; gap: 9px; width: 220px; height: 122px; padding-top: 17px; background: #fff; box-shadow: 0 6px 22px rgba(0, 0, 0, 0.4); }
            .text { font-family: "Open Sans", sans-serif; font-weight: 300; font-size: 11px; line-height: 20px; color: #444; }
            .close { position: absolute; top: 12px; right: 11px; color: #555; }
            .pointer { position: absolute; left: 113px; top: 95px; }
        </style>
        <div class="box" role="dialog" aria-label="Koppeling">
            <ui-icon name="check" size="30"></ui-icon>
            <div class="text"><slot></slot></div>
            <button class="close" aria-label="Sluiten"><ui-icon name="close" size="12" weight="2"></ui-icon></button>
            <ui-icon class="pointer" name="pointer" size="14"></ui-icon>
        </div>`;
    }
}
customElements.define("message-dialog", MessageDialog);

class ExcelApp extends HTMLElement {
    constructor() {
        super();
        this.attachShadow({ mode: "open" });
        this.shadowRoot.innerHTML = `
        <style>
            ${CONTROLS}
            :host { position: relative; display: flex; flex-direction: column; flex: 1; min-height: 0; }
            header { display: grid; grid-template-columns: 1fr auto 1fr; align-items: center; height: 33px; background: #1c8b46; color: #fff; }
            .left { display: flex; align-items: center; padding-left: 12px; }
            .brand { font-size: 11px; margin-left: 21px; padding-right: 11px; border-right: 1px solid #489f68; }
            .path { margin-left: 10px; display: flex; align-items: center; gap: 4px; }
            .doc { display: flex; align-items: center; gap: 10px; }
            .doc b { font-size: 11px; font-weight: 400; }
            .user { text-align: right; padding-right: 14px; }
        </style>
        <header>
            <div class="left"><button aria-label="Apps"><ui-icon name="waffle" size="11"></ui-icon></button><span class="brand">Excel</span><span class="path"><a href="#">CPC-1 LG00</a><ui-icon name="right" size="6" weight="3"></ui-icon><a href="#">A01 - Analyse van Observatie gesprekken</a></span></div>
            <div class="doc"><b>Markers Overzicht Nederlands (1) (1)</b><span>-</span><span>Opgeslagen</span></div>
            <div class="user">Dirk V2M</div>
        </header>
        <excel-ribbon></excel-ribbon>
        <worksheet-grid></worksheet-grid>
        <sheet-tabs></sheet-tabs>
        <message-dialog>Koppeling is verzonden</message-dialog>`;
    }
}
customElements.define("excel-app", ExcelApp);

class TaskBar extends HTMLElement {
    constructor() {
        super();
        this.attachShadow({ mode: "open" });
        const apps = [
            ["windows", "Start", 11], ["find", "Zoeken", 11], ["cortana", "Cortana", 12], ["taskview", "Taakweergave", 11],
            ["explorer", "Verkenner", 16, "run"], ["calc", "Rekenmachine", 15], ["flow", "Flow", 16], ["slack", "Slack", 16],
            ["office", "Office", 15], ["chrome", "Chrome", 16], ["outlook", "Outlook", 16], ["todo", "To Do", 15, "", "<em>16</em>"],
            ["photos", "Foto's", 14], ["indesign", "InDesign", 15, "", "<i class='id'>Id</i>"], ["teams", "Teams", 16, "", "<i>T</i>"], ["onenote", "OneNote", 16, "", "<i>N</i>"],
            ["pinwheel", "Pinwheel", 16, "run"], ["teams", "Teams", 16, "run", "<i>T</i><ui-icon class='mini' name='horse' size='10'></ui-icon>"], ["video", "Video", 16, "run"], ["chrome", "Chrome", 16, "run on", "<ui-icon class='mini' name='horse' size='10'></ui-icon>"]
        ];
        this.shadowRoot.innerHTML = `
        <style>
            ${CONTROLS}
            :host { display: flex; justify-content: space-between; height: 27px; background: #1c212b; color: #fff; }
            .apps { display: flex; width: 670px; }
            .apps button { position: relative; flex: 1; }
            .apps .run::after { content: ""; position: absolute; left: 3px; right: 3px; bottom: 0; height: 2px; background: #76b9ed; }
            .apps .on { background: #4a5059; }
            .apps .on::after { left: 0; right: 0; }
            i { position: absolute; left: 11px; top: 7px; font: bold 8px/12px "Liberation Sans", sans-serif; }
            .id { left: 13px; color: #e8407f; }
            em { position: absolute; right: 3px; bottom: 2px; width: 12px; border: 1px solid #aaa; border-radius: 6px; background: #222; font: bold 8px/10px "Liberation Sans", sans-serif; }
            .mini { position: absolute; right: 5px; bottom: 4px; }
            .clock { padding: 1px 2px 0 0; font-size: 8px; line-height: 12px; text-align: center; }
        </style>
        <div class="apps">${apps.map(([icon, label, size, state = "", extra = ""]) => `<button class="${state}" aria-label="${label}"><ui-icon name="${icon}" size="${size}"></ui-icon>${extra}</button>`).join("")}</div>
        <div class="clock">18:14<br>13-11-2020</div>`;
    }
}
customElements.define("task-bar", TaskBar);
</script>
</body>
</html>
